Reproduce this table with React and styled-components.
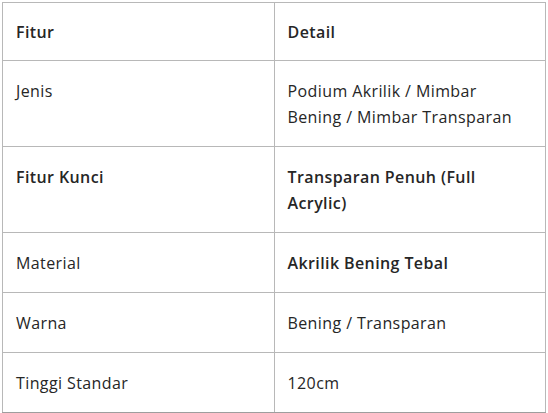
import React from "react";
import styled, { createGlobalStyle } from "styled-components";

const GlobalStyle = createGlobalStyle`
  body {
    margin: 0;
    background: #fff;
    font-family: "Open Sans", "Noto Sans", sans-serif;
    color: #262626;
  }
`;

const Wrapper = styled.div`
  padding: 2px;
`;

const SpecTable = styled.table`
  width: 544px;
  border-collapse: collapse;
  table-layout: fixed;
  font-size: 16px;
  letter-spacing: 0.4px;
  line-height: 26px;
  border-bottom: 2px solid #9e9e9e;
`;

const HeadCell = styled.th`
  width: 50%;
  text-align: left;
  font-weight: 600;
  padding: 16px 13px 15px;
  border: 1px solid #b8b8b8;
`;

const Cell = styled.td`
  vertical-align: top;
  padding: 17px 13px 16px;
  border: 1px solid #b8b8b8;
  font-weight: ${(p) => (p.strong ? 600 : 400)};
`;

const rows = [
  { label: "Jenis", value: "Podium Akrilik / Mimbar Bening / Mimbar Transparan" },
  { label: "Fitur Kunci", value: "Transparan Penuh (Full Acrylic)", strongLabel: true, strongValue: true },
  { label: "Material", value: "Akrilik Bening Tebal", strongValue: true },
  { label: "Warna", value: "Bening / Transparan" },
  { label: "Tinggi Standar", value: "120cm" },
];

const App = () => {
  return (
    <Wrapper>
      <GlobalStyle />
      <SpecTable>
        <thead>
          <tr>
            <HeadCell>Fitur</HeadCell>
            <HeadCell>Detail</HeadCell>
          </tr>
        </thead>
        <tbody>
          {rows.map((row) => (
            <tr key={row.label}>
              <Cell strong={row.strongLabel}>{row.label}</Cell>
              <Cell strong={row.strongValue}>{row.value}</Cell>
            </tr>
          ))}
        </tbody>
      </SpecTable>
    </Wrapper>
  );
};

export default App;
